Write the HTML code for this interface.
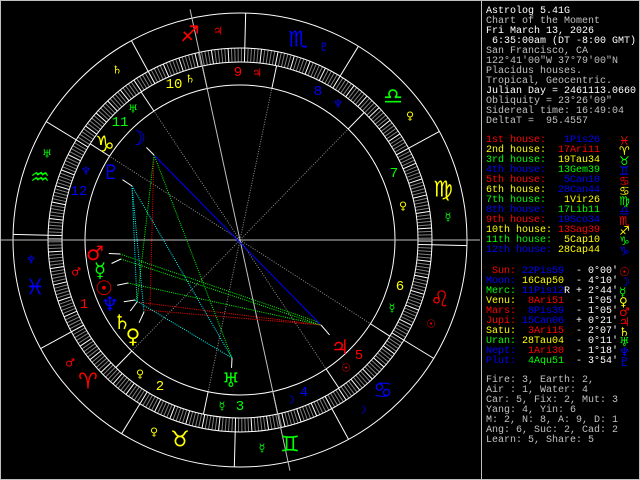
<!DOCTYPE html>
<html><head><meta charset="utf-8">
<style>
html,body{margin:0;padding:0;background:#000;}
#wrap{position:relative;width:640px;height:480px;background:#000;overflow:hidden;box-sizing:border-box;border:1px solid #c0c0c0;}
#chart{position:absolute;left:-1px;top:-1px;}
#panel{position:absolute;left:480px;top:0;width:160px;height:480px;border-left:1px solid #c0c0c0;box-sizing:border-box;}
.t{position:absolute;left:4px;font-family:"Liberation Mono","DejaVu Sans Mono",monospace;font-size:10px;line-height:10px;white-space:pre;color:#c0c0c0;}
.w{color:#fff}.r{color:#f00}.y{color:#ff0}.g{color:#0f0}.b{color:#00f}
.gl{position:absolute;left:137px;font-family:"DejaVu Sans",sans-serif;font-size:12px;line-height:10px;}
</style></head><body>
<div id="wrap">
<svg id="chart" width="481" height="481" viewBox="0 0 481 481" xmlns="http://www.w3.org/2000/svg">
<g id="g" fill="none"></g>
<g font-family="DejaVu Sans, sans-serif" text-anchor="middle" dominant-baseline="central">
<g font-size="22">
<text x="105" y="145" fill="#ff0">♑</text>
<text x="40" y="178" fill="#0f0">♒</text>
<text x="35" y="288" fill="#00f">♓</text>
<text x="88" y="382" fill="#f00">♈</text>
<text x="180" y="440" fill="#ff0">♉</text>
<text x="290" y="445" fill="#0f0">♊</text>
<text x="383" y="391" fill="#00f">♋</text>
<text x="440" y="300" fill="#f00">♌</text>
<text x="443" y="190" fill="#ff0">♍</text>
<text x="393" y="97" fill="#0f0">♎</text>
<text x="298" y="40" fill="#00f">♏</text>
<text x="190" y="35" fill="#f00">♐</text>
</g>
<g font-size="11">
<text x="117" y="70" fill="#ff0">♄</text>
<text x="218" y="31" fill="#f00">♃</text>
<text x="324" y="47" fill="#00f">♇</text>
<text x="410" y="116" fill="#ff0">♀</text>
<text x="448" y="217" fill="#0f0">☿</text>
<text x="431" y="324" fill="#f00">☉</text>
<text x="362" y="410" fill="#00f">☽</text>
<text x="262" y="448" fill="#0f0">☿</text>
<text x="154" y="432" fill="#ff0">♀</text>
<text x="70" y="363" fill="#f00">♂</text>
<text x="31" y="260" fill="#00f">♆</text>
<text x="47" y="154" fill="#0f0">♅</text>
<text x="190" y="79" fill="#ff0">♄</text>
<text x="133" y="109" fill="#0f0">♅</text>
<text x="86" y="171" fill="#00f">♆</text>
<text x="76" y="272" fill="#f00">♂</text>
<text x="140" y="374" fill="#ff0">♀</text>
<text x="222" y="406" fill="#0f0">☿</text>
<text x="290" y="400" fill="#00f">☽</text>
<text x="346" y="368" fill="#f00">☉</text>
<text x="392" y="308" fill="#0f0">☿</text>
<text x="403" y="206" fill="#ff0">♀</text>
<text x="338" y="104" fill="#00f">♆</text>
<text x="257" y="73" fill="#f00">♃</text>
</g>
<g font-family="Liberation Mono, monospace" font-size="14">
<text x="84" y="305" fill="#f00">1</text>
<text x="160" y="387" fill="#ff0">2</text>
<text x="240" y="407" fill="#0f0">3</text>
<text x="304" y="393" fill="#00f">4</text>
<text x="359" y="356" fill="#f00">5</text>
<text x="400" y="287" fill="#ff0">6</text>
<text x="394" y="174" fill="#0f0">7</text>
<text x="318" y="92" fill="#00f">8</text>
<text x="238" y="73" fill="#f00">9</text>
<text x="174" y="85" fill="#ff0">10</text>
<text x="120" y="123" fill="#0f0">11</text>
<text x="79" y="192" fill="#00f">12</text>
</g>
<g font-size="20">
<text x="137" y="138" fill="#00f">☽</text>
<text x="111" y="172" fill="#00f">♇</text>
<text x="95" y="253" fill="#f00">♂</text>
<text x="100" y="270" fill="#0f0">☿</text>
<text x="104" y="288" fill="#f00">☉</text>
<text x="110" y="304" fill="#00f">♆</text>
<text x="122" y="322" fill="#ff0">♄</text>
<text x="133" y="336" fill="#ff0">♀</text>
<text x="231" y="380" fill="#0f0">♅</text>
<text x="340" y="347" fill="#f00">♃</text>
</g>
</g>
</svg>
<div id="panel">
<div class="t w" style="top:6px">Astrolog 5.41G</div>
<div class="t" style="top:16px">Chart of the Moment</div>
<div class="t w" style="top:26px">Fri March 13, 2026</div>
<div class="t w" style="top:36px"> 6:35:00am (DT -8:00 GMT)</div>
<div class="t" style="top:46px">San Francisco, CA</div>
<div class="t" style="top:56px">122°41'00"W 37°79'00"N</div>
<div class="t" style="top:66px">Placidus houses.</div>
<div class="t" style="top:76px">Tropical, Geocentric.</div>
<div class="t w" style="top:86px">Julian Day = 2461113.0660</div>
<div class="t" style="top:96px">Obliquity = 23°26'09"</div>
<div class="t" style="top:106px">Sidereal time: 16:49:04</div>
<div class="t" style="top:116px">DeltaT =  95.4557</div>

<div class="t" style="top:135px"><span class="r">1st house:   </span><span class="b">1Pis26</span></div>
<div class="t" style="top:145px"><span class="y">2nd house:  </span><span class="r">17Ari11</span></div>
<div class="t" style="top:155px"><span class="g">3rd house:  </span><span class="y">19Tau34</span></div>
<div class="t" style="top:165px"><span class="b">4th house:  </span><span class="g">13Gem39</span></div>
<div class="t" style="top:175px"><span class="r">5th house:   </span><span class="b">5Can10</span></div>
<div class="t" style="top:185px"><span class="y">6th house:  </span><span class="b">28Can44</span></div>
<div class="t" style="top:195px"><span class="g">7th house:   </span><span class="y">1Vir26</span></div>
<div class="t" style="top:205px"><span class="b">8th house:  </span><span class="g">17Lib11</span></div>
<div class="t" style="top:215px"><span class="r">9th house:  </span><span class="b">19Sco34</span></div>
<div class="t" style="top:225px"><span class="y">10th house: </span><span class="r">13Sag39</span></div>
<div class="t" style="top:235px"><span class="g">11th house:  </span><span class="y">5Cap10</span></div>
<div class="t" style="top:245px"><span class="b">12th house: </span><span class="y">28Cap44</span></div>
<div class="gl r" style="top:135px">♓</div><div class="gl y" style="top:145px">♈</div><div class="gl g" style="top:155px">♉</div><div class="gl b" style="top:165px">♊</div><div class="gl r" style="top:175px">♋</div><div class="gl y" style="top:185px">♋</div><div class="gl g" style="top:195px">♍</div><div class="gl b" style="top:205px">♎</div><div class="gl r" style="top:215px">♏</div><div class="gl y" style="top:225px">♐</div><div class="gl g" style="top:235px">♑</div><div class="gl b" style="top:245px">♑</div>

<div class="t" style="top:266px"><span class="r"> Sun: </span><span class="b">22Pis59</span><span class="w">  - 0°00'</span></div>
<div class="t" style="top:276px"><span class="b">Moon: </span><span class="y">16Cap50</span><span class="w">  - 4°10'</span></div>
<div class="t" style="top:286px"><span class="g">Merc: </span><span class="b">11Pis12</span><span class="w">R + 2°44'</span></div>
<div class="t" style="top:296px"><span class="y">Venu: </span><span class="r"> 8Ari51</span><span class="w">  - 1°05'</span></div>
<div class="t" style="top:306px"><span class="r">Mars: </span><span class="b"> 8Pis39</span><span class="w">  - 1°05'</span></div>
<div class="t" style="top:316px"><span class="r">Jupi: </span><span class="b">15Can06</span><span class="w">  + 0°21'</span></div>
<div class="t" style="top:326px"><span class="y">Satu: </span><span class="r"> 3Ari15</span><span class="w">  - 2°07'</span></div>
<div class="t" style="top:336px"><span class="g">Uran: </span><span class="y">28Tau04</span><span class="w">  - 0°11'</span></div>
<div class="t" style="top:346px"><span class="b">Nept: </span><span class="r"> 1Ari30</span><span class="w">  - 1°18'</span></div>
<div class="t" style="top:356px"><span class="b">Plut: </span><span class="g"> 4Aqu51</span><span class="w">  - 3°54'</span></div>
<div class="gl r" style="top:266px">☉</div><div class="gl b" style="top:276px">☽</div><div class="gl g" style="top:286px">☿</div><div class="gl y" style="top:296px">♀</div><div class="gl r" style="top:306px">♂</div><div class="gl r" style="top:316px">♃</div><div class="gl y" style="top:326px">♄</div><div class="gl g" style="top:336px">♅</div><div class="gl b" style="top:346px">♆</div><div class="gl b" style="top:356px">♇</div>

<div class="t" style="top:375px">Fire: 3, Earth: 2,</div>
<div class="t" style="top:385px">Air : 1, Water: 4</div>
<div class="t" style="top:395px">Car: 5, Fix: 2, Mut: 3</div>
<div class="t" style="top:405px">Yang: 4, Yin: 6</div>
<div class="t" style="top:415px">M: 2, N: 8, A: 9, D: 1</div>
<div class="t" style="top:425px">Ang: 6, Suc: 2, Cad: 2</div>
<div class="t" style="top:435px">Learn: 5, Share: 5</div>
</div>
</div>
<script>
(function(){
var g=document.getElementById('g'),NS='http://www.w3.org/2000/svg',A=331.43;
function P(l,r){var t=(180+l-A)*Math.PI/180;return [240+r*Math.cos(t),240-r*Math.sin(t)];}
function L(a,b,c,w,d){var e=document.createElementNS(NS,'line');e.setAttribute('x1',a[0]);e.setAttribute('y1',a[1]);e.setAttribute('x2',b[0]);e.setAttribute('y2',b[1]);e.setAttribute('stroke',c);e.setAttribute('stroke-width',w||1);if(d)e.setAttribute('stroke-dasharray',d);g.appendChild(e);}
function C(r){var e=document.createElementNS(NS,'circle');e.setAttribute('cx',240);e.setAttribute('cy',240);e.setAttribute('r',r);e.setAttribute('stroke','#fff');g.appendChild(e);}
var i;
for(i=0;i<360;i++){L(P(i,178),P(i,192),(i%5==0)?'#fff':'#808080',1);}
C(227);C(192);C(178);C(155);
for(i=0;i<12;i++){L(P(i*30,192),P(i*30,227),'#fff');}
var H=[331.43,17.18,49.57,73.65,95.17,118.73,151.43,197.18,229.57,253.65,275.17,298.73];
for(i=0;i<12;i++){L(P(H[i],155),P(H[i],178),'#fff');if(i%3)L([240,240],P(H[i],155),'#909090',1,'1 1.5');}
L([1,240],[480,240],'#c0c0c0');
L(P(253.65,236),P(73.65,236),'#c0c0c0');
var D='1 1.2';
L([154,155],[321,325],'#00f');
L([154,155],[150,307],'#f00',1,D);
L([145,310],[321,325],'#f00',1,D);
L([137,302],[321,325],'#f00',1,D);
L([121,259],[321,325],'#0f0',1,D);
L([128,283],[321,325],'#0f0',1,D);
L([120,254],[318,322],'#0f0',1,D);
L([154,155],[232,358],'#0f0',1,D);
L([154,155],[137,302],'#0f0',1,D);
L([132,186],[137,302],'#0ff',1,D);
L([132,186],[144,312],'#0ff',1,D);
L([132,186],[232,358],'#0ff',1,D);
L([135,300],[232,358],'#0ff',1,D);
var pl=[[137,138,154,155],[111,172,132,186],[95,253,120,254],[100,269,121,259],[104,288,128,283],[110,304,135,300],[122,322,137,302],[133,336,144,312],[231,380,232,358],[340,347,321,325]];
pl.forEach(function(p){L([p[0]+(p[2]-p[0])*0.55,p[1]+(p[3]-p[1])*0.55],[p[2],p[3]],'#fff');});
})();
</script>
</body></html>
